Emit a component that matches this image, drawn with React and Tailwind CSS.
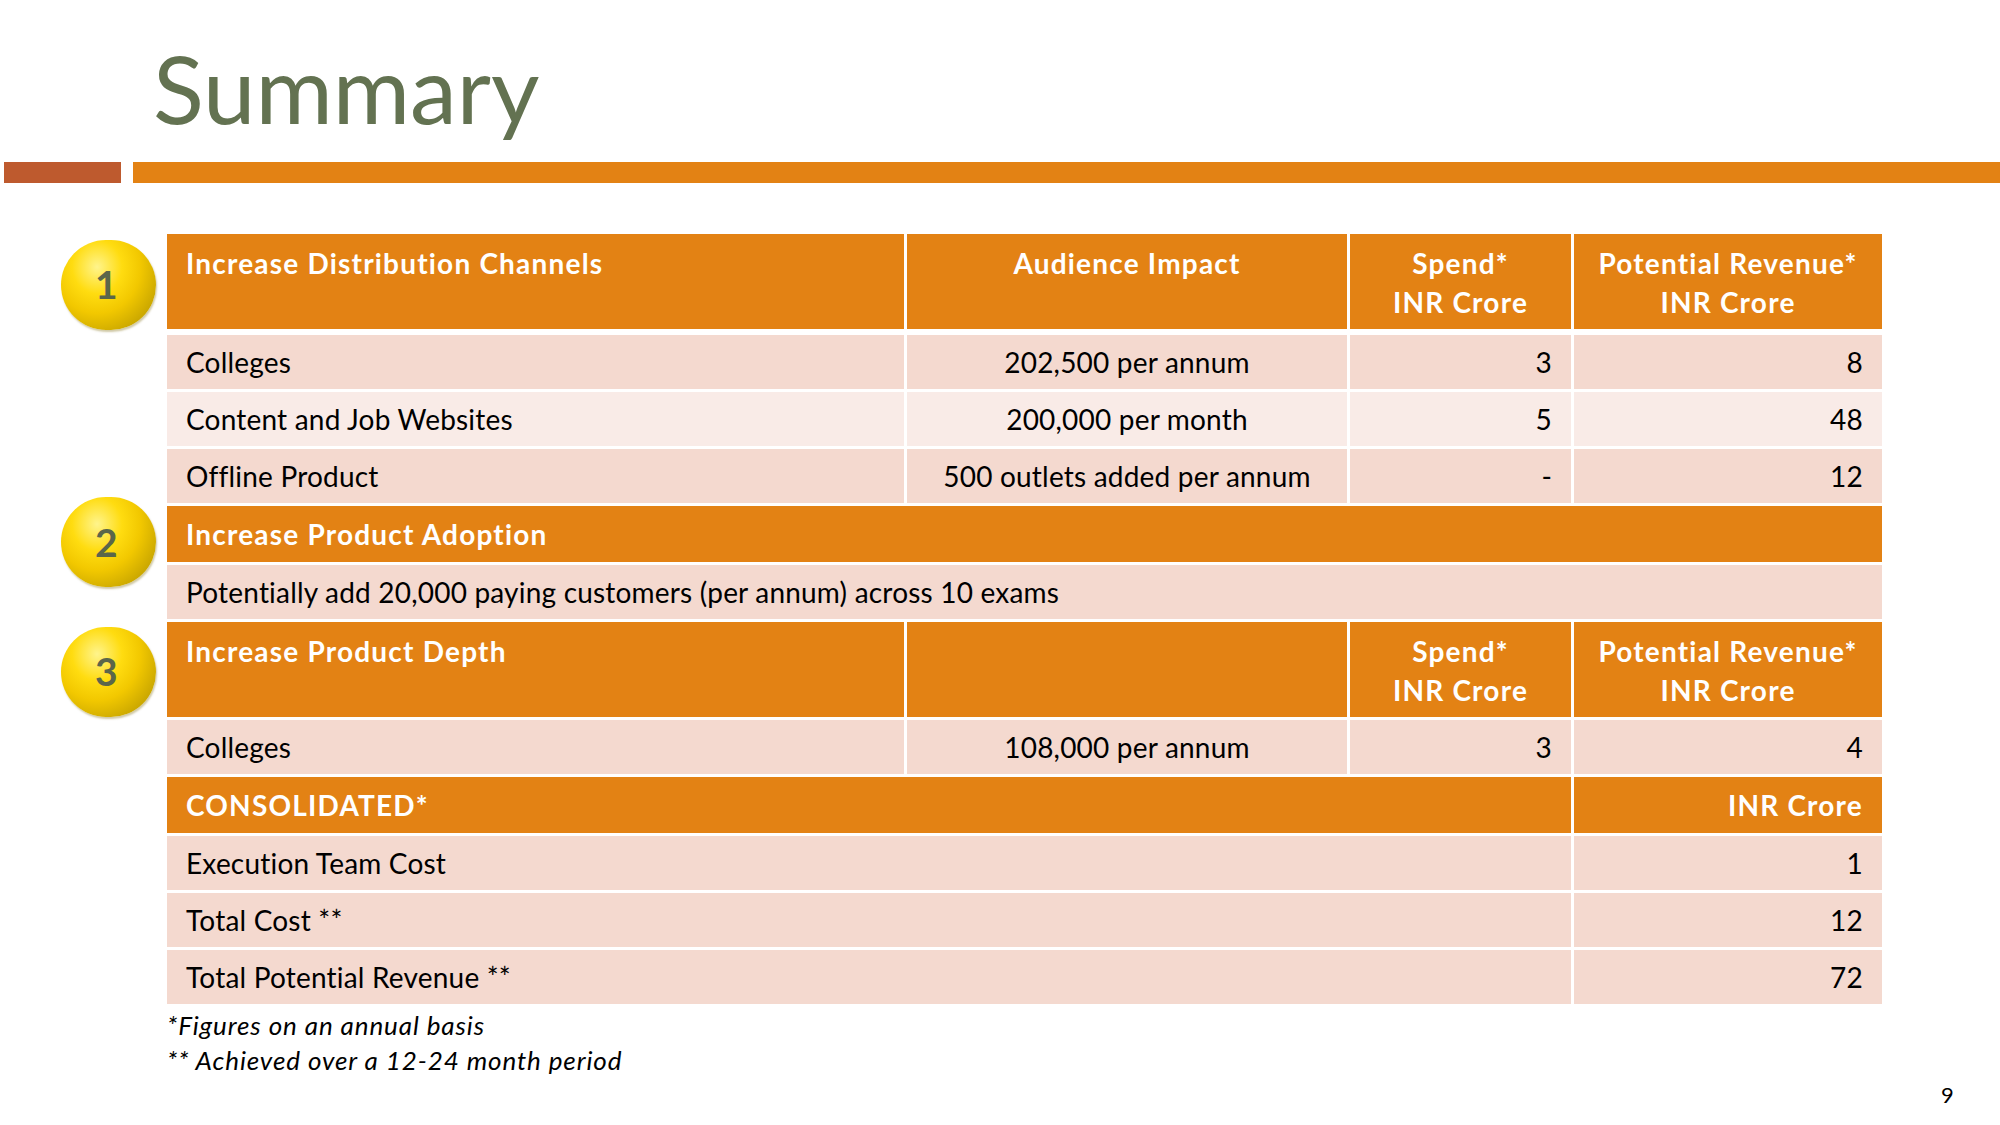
import React from 'react';

const FONT = { fontFamily: 'Lato, "Open Sans", sans-serif' };

const COLS = 'grid grid-cols-[737px_440px_221px_308px] gap-x-[3px] w-[1715px]';

function Ball({ n, shift }) {
  return (
    <div
      className={`w-[95px] h-[90px] -my-[20px] rounded-full flex items-center justify-center bg-[radial-gradient(ellipse_at_38%_30%,#fff48c_0%,#ffdc10_30%,#f2c800_52%,#cfab00_75%,#a48a0a_100%)] shadow-[1px_2px_2px_rgba(120,100,0,0.35)] ${shift}`}
    >
      <span className="text-[39px] font-bold leading-none text-[#5b664a] -ml-[4px]">{n}</span>
    </div>
  );
}

function Row({ ball, shift, gap = 'mt-[3px]', children, h }) {
  return (
    <div className={`flex ${gap}`}>
      <div className="w-[167px] shrink-0 flex items-center pl-[61px]">
        {ball && <Ball n={ball} shift={shift} />}
      </div>
      <div className={`${COLS} ${h}`}>{children}</div>
    </div>
  );
}

function HeadCell({ children, align = 'text-left', span = '' }) {
  return (
    <div className={`bg-[#e38214] text-white font-bold tracking-[1.2px] px-[19px] pt-[10px] leading-[39px] ${align} ${span}`}>
      {children}
    </div>
  );
}

function Cell({ children, align = 'justify-start', light, span = '' }) {
  return (
    <div
      className={`${light ? 'bg-[#f9ebe7]' : 'bg-[#f4d9cf]'} flex items-center px-[19px] ${align} ${span}`}
    >
      {children}
    </div>
  );
}

function DataRow({ label, audience, spend, revenue, light }) {
  return (
    <Row h="h-[54px]">
      <Cell light={light}>{label}</Cell>
      <Cell light={light} align="justify-center">{audience}</Cell>
      <Cell light={light} align="justify-end">{spend}</Cell>
      <Cell light={light} align="justify-end">{revenue}</Cell>
    </Row>
  );
}

function TotalRow({ label, value }) {
  return (
    <Row h="h-[54px]">
      <Cell span="col-span-3">{label}</Cell>
      <Cell align="justify-end">{value}</Cell>
    </Row>
  );
}

export default function App() {
  return (
    <div className="w-[2000px] h-[1125px] bg-white overflow-hidden text-[28px] tracking-[0.2px] text-black" style={FONT}>
      <h1 className="pt-[41px] pl-[153px] text-[94px] leading-none tracking-normal text-[#637251] font-normal">Summary</h1>

      <div className="flex mt-[27px] h-[21px]">
        <div className="ml-[4px] w-[117px] bg-[#be5a2e]" />
        <div className="ml-[12px] flex-1 bg-[#e38214]" />
      </div>

      <div className="mt-[51px]">
        <Row ball="1" shift="translate-y-[3px]" gap="" h="h-[95px]">
          <HeadCell>Increase Distribution Channels</HeadCell>
          <HeadCell align="text-center">Audience Impact</HeadCell>
          <HeadCell align="text-center">Spend*<br />INR Crore</HeadCell>
          <HeadCell align="text-center">Potential Revenue*<br />INR Crore</HeadCell>
        </Row>
        <div className="h-[3px]" />
        <DataRow label="Colleges" audience="202,500 per annum" spend="3" revenue="8" />
        <DataRow label="Content and Job Websites" audience="200,000 per month" spend="5" revenue="48" light />
        <DataRow label="Offline Product" audience="500 outlets added per annum" spend="-" revenue="12" />

        <Row ball="2" shift="translate-y-[8px]" h="h-[56px]">
          <div className="col-span-4 bg-[#e38214] text-white font-bold tracking-[1.2px] px-[19px] flex items-center">
            Increase Product Adoption
          </div>
        </Row>
        <Row h="h-[54px]">
          <Cell span="col-span-4">Potentially add 20,000 paying customers (per annum) across 10 exams</Cell>
        </Row>

        <Row ball="3" shift="translate-y-[2px]" h="h-[95px]">
          <HeadCell>Increase Product Depth</HeadCell>
          <HeadCell />
          <HeadCell align="text-center">Spend*<br />INR Crore</HeadCell>
          <HeadCell align="text-center">Potential Revenue*<br />INR Crore</HeadCell>
        </Row>
        <DataRow label="Colleges" audience="108,000 per annum" spend="3" revenue="4" />

        <Row h="h-[56px]">
          <div className="col-span-3 bg-[#e38214] text-white font-bold tracking-[1.2px] px-[19px] flex items-center">CONSOLIDATED*</div>
          <div className="bg-[#e38214] text-white font-bold tracking-[1.2px] px-[19px] flex items-center justify-end">INR Crore</div>
        </Row>
        <TotalRow label="Execution Team Cost" value="1" />
        <TotalRow label="Total Cost **" value="12" />
        <TotalRow label="Total Potential Revenue **" value="72" />
      </div>

      <div className="pl-[167px] mt-[4px] italic text-[26px] tracking-[0.9px] leading-[35px]">
        <p>*Figures on an annual basis</p>
        <p>** Achieved over a 12-24 month period</p>
      </div>
      <div className="mt-[5px] pr-[46px] text-right text-[22px] leading-[24px]">9</div>
    </div>
  );
}
